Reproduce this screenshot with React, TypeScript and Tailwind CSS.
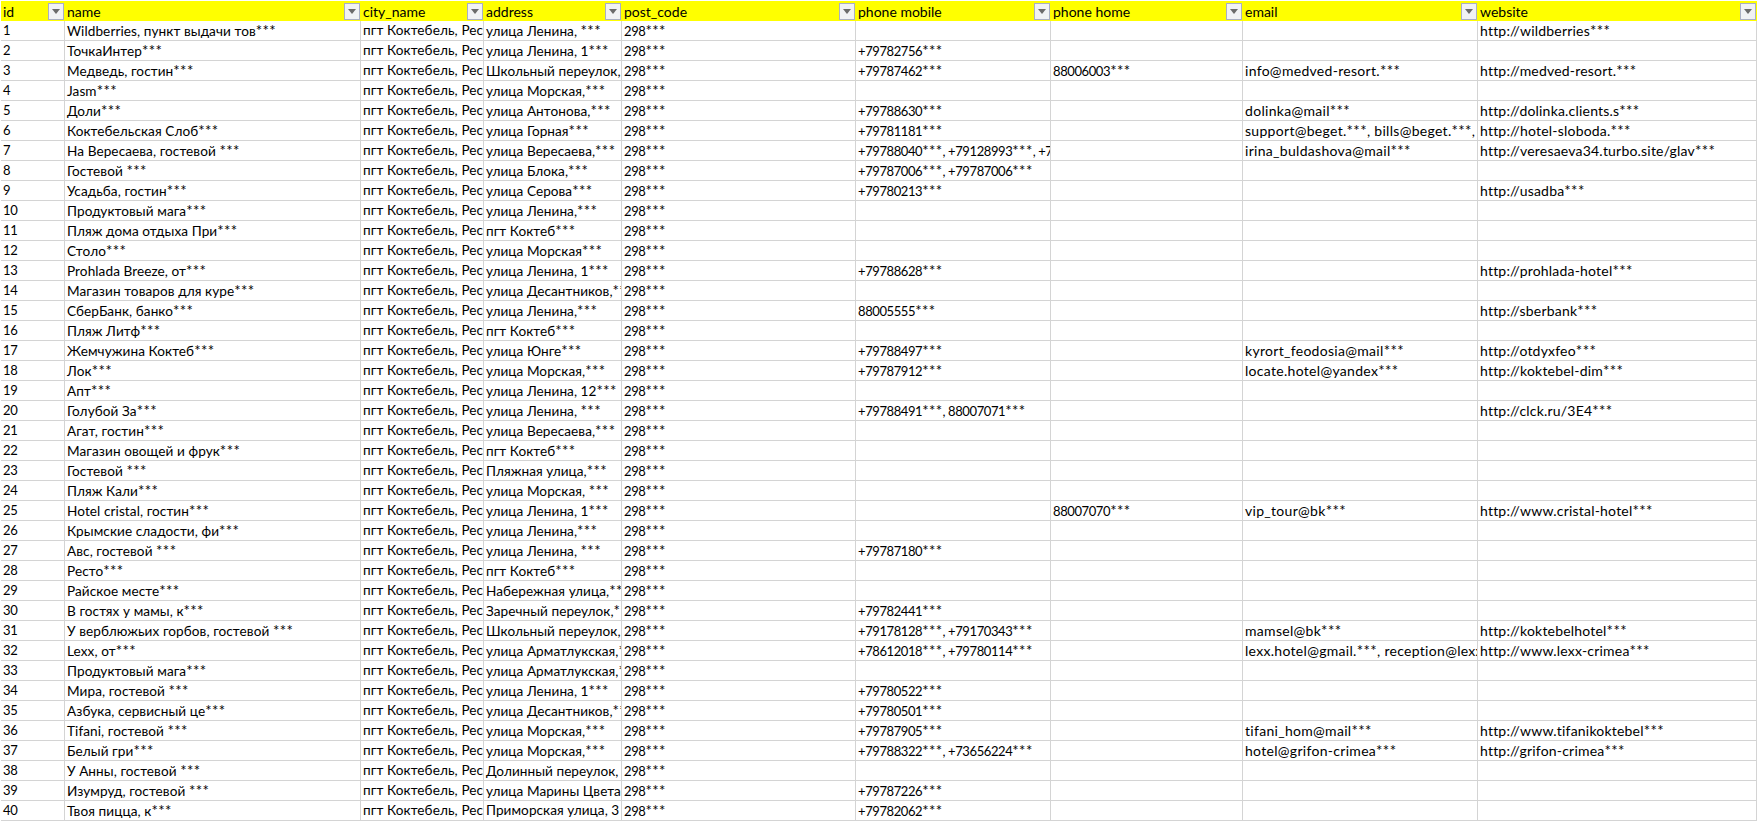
const headers = ["id", "name", "city_name", "address", "post_code", "phone mobile", "phone home", "email", "website"];

const CITY = "пгт Коктебель, Рес";

// body text per column: Lato runs wider than the sheet's font on digits and cyrillic
const colClass = [
  "text-[13px] tracking-[-0.4px]",
  "text-[13.6px] tracking-[0.08px]",
  "text-[13.6px] tracking-[0.1px]",
  "text-[13.6px] tracking-[0.05px]",
  "text-[13px] tracking-[-0.4px]",
  "text-[13px] tracking-[-0.4px]",
  "text-[13px] tracking-[-0.4px]",
  "text-[14px] tracking-[0.3px]",
  "text-[14px] tracking-[0.2px]",
];

// name, address, mobile, home, email, website
const rows: string[][] = [
  ["Wildberries, пункт выдачи тов***", "улица Ленина, ***", "", "", "", "http://wildberries***"],
  ["ТочкаИнтер***", "улица Ленина, 1***", "+79782756***", "", "", ""],
  ["Медведь, гостин***", "Школьный переулок, ***", "+79787462***", "88006003***", "info@medved-resort.***", "http://medved-resort.***"],
  ["Jasm***", "улица Морская,***", "", "", "", ""],
  ["Доли***", "улица Антонова,***", "+79788630***", "", "dolinka@mail***", "http://dolinka.clients.s***"],
  ["Коктебельская Слоб***", "улица Горная***", "+79781181***", "", "support@beget.***, bills@beget.***, admin@beget.***", "http://hotel-sloboda.***"],
  ["На Вересаева, гостевой ***", "улица Вересаева,***", "+79788040***, +79128993***, +79780000***", "", "irina_buldashova@mail***", "http://veresaeva34.turbo.site/glav***"],
  ["Гостевой ***", "улица Блока,***", "+79787006***, +79787006***", "", "", ""],
  ["Усадьба, гостин***", "улица Серова***", "+79780213***", "", "", "http://usadba***"],
  ["Продуктовый мага***", "улица Ленина,***", "", "", "", ""],
  ["Пляж дома отдыха При***", "пгт Коктеб***", "", "", "", ""],
  ["Столо***", "улица Морская***", "", "", "", ""],
  ["Prohlada Breeze, от***", "улица Ленина, 1***", "+79788628***", "", "", "http://prohlada-hotel***"],
  ["Магазин товаров для куре***", "улица Десантников,***", "", "", "", ""],
  ["СберБанк, банко***", "улица Ленина,***", "88005555***", "", "", "http://sberbank***"],
  ["Пляж Литф***", "пгт Коктеб***", "", "", "", ""],
  ["Жемчужина Коктеб***", "улица Юнге***", "+79788497***", "", "kyrort_feodosia@mail***", "http://otdyxfeo***"],
  ["Лок***", "улица Морская,***", "+79787912***", "", "locate.hotel@yandex***", "http://koktebel-dim***"],
  ["Апт***", "улица Ленина, 12***", "", "", "", ""],
  ["Голубой За***", "улица Ленина, ***", "+79788491***, 88007071***", "", "", "http://clck.ru/3E4***"],
  ["Агат, гостин***", "улица Вересаева,***", "", "", "", ""],
  ["Магазин овощей и фрук***", "пгт Коктеб***", "", "", "", ""],
  ["Гостевой ***", "Пляжная улица,***", "", "", "", ""],
  ["Пляж Кали***", "улица Морская, ***", "", "", "", ""],
  ["Hotel cristal, гостин***", "улица Ленина, 1***", "", "88007070***", "vip_tour@bk***", "http://www.cristal-hotel***"],
  ["Крымские сладости, фи***", "улица Ленина,***", "", "", "", ""],
  ["Авс, гостевой ***", "улица Ленина, ***", "+79787180***", "", "", ""],
  ["Ресто***", "пгт Коктеб***", "", "", "", ""],
  ["Райское месте***", "Набережная улица,***", "", "", "", ""],
  ["В гостях у мамы, к***", "Заречный переулок,***", "+79782441***", "", "", ""],
  ["У верблюжьих горбов, гостевой ***", "Школьный переулок, ***", "+79178128***, +79170343***", "", "mamsel@bk***", "http://koktebelhotel***"],
  ["Lexx, от***", "улица Арматлукская,***", "+78612018***, +79780114***", "", "lexx.hotel@gmail.***, reception@lexx-crimea***", "http://www.lexx-crimea***"],
  ["Продуктовый мага***", "улица Арматлукская,***", "", "", "", ""],
  ["Мира, гостевой ***", "улица Ленина, 1***", "+79780522***", "", "", ""],
  ["Азбука, сервисный це***", "улица Десантников,***", "+79780501***", "", "", ""],
  ["Tifani, гостевой ***", "улица Морская,***", "+79787905***", "", "tifani_hom@mail***", "http://www.tifanikoktebel***"],
  ["Белый гри***", "улица Морская,***", "+79788322***, +73656224***", "", "hotel@grifon-crimea***", "http://grifon-crimea***"],
  ["У Анны, гостевой ***", "Долинный переулок, ***", "", "", "", ""],
  ["Изумруд, гостевой ***", "улица Марины Цветаевой***", "+79787226***", "", "", ""],
  ["Твоя пицца, к***", "Приморская улица, 3", "+79782062***", "", "", ""],
];

const FilterButton = () => (
  <span className="flex h-[17px] w-[16px] shrink-0 items-center justify-center border border-[#a9afc4] bg-[#f1f2f4]">
    <svg width="8" height="5" viewBox="0 0 8 5">
      <path d="M0 0h8L4 5z" fill="#6b6b6b" />
    </svg>
  </span>
);

const Cell = ({ text, col }: { text: string; col: number }) => (
  <div className={`h-5 overflow-hidden whitespace-nowrap border-r border-b border-[#d4d4d4] bg-white pl-[2px] leading-[19px] ${colClass[col]}`}>
    {text.split(/(\*+)/).map((part, i) =>
      part.startsWith("*") ? (
        <span key={i} className="text-[15px] tracking-[0.4px]">
          {part}
        </span>
      ) : (
        part
      )
    )}
  </div>
);

const App = () => {
  return (
    <div className="h-[821px] w-[1757px] overflow-hidden bg-white pt-px pl-px font-['Lato',sans-serif] text-[14px] text-black">
      <div className="grid grid-cols-[64px_296px_123px_138px_234px_195px_192px_235px_279px] auto-rows-[20px]">
        {headers.map((h) => (
          <div key={h} className="flex h-5 items-center justify-between bg-[#ffff00] pr-px pl-[2px] leading-[19px]">
            <span>{h}</span>
            <FilterButton />
          </div>
        ))}
        {rows.map((r, i) => (
          <div key={i} className="contents">
            <Cell col={0} text={String(i + 1)} />
            <Cell col={1} text={r[0]} />
            <Cell col={2} text={CITY} />
            <Cell col={3} text={r[1]} />
            <Cell col={4} text="298***" />
            <Cell col={5} text={r[2]} />
            <Cell col={6} text={r[3]} />
            <Cell col={7} text={r[4]} />
            <Cell col={8} text={r[5]} />
          </div>
        ))}
      </div>
    </div>
  );
};

export default App;
